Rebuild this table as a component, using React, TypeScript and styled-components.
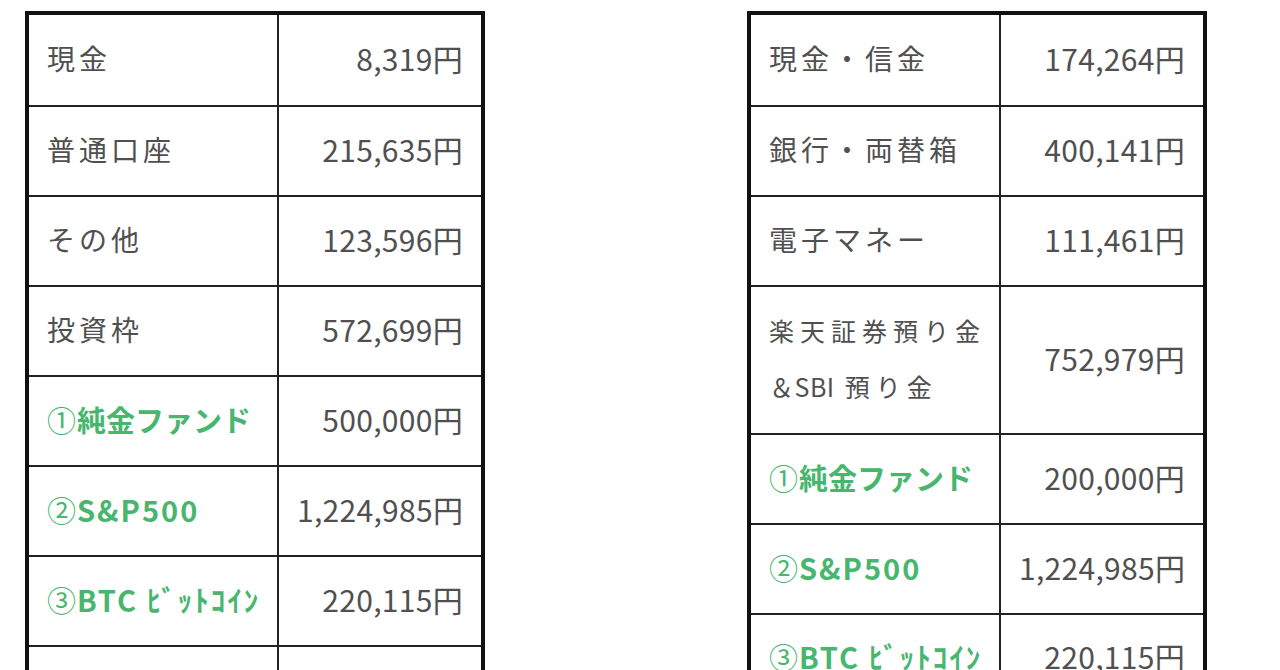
import * as React from "react";
import styled, { createGlobalStyle } from "styled-components";

type Row = {
  label: React.ReactNode;
  amount: string;
  tall?: boolean;
};

const GlobalStyle = createGlobalStyle`
  html, body {
    margin: 0;
    padding: 0;
    background: #fff;
  }
  body {
    font-family: "Noto Sans CJK JP", "Noto Sans", sans-serif;
    overflow: hidden;
  }
`;

const Page = styled.main`
  display: flex;
  align-items: flex-start;
  gap: 262px;
  padding: 11px 0 0 25px;
`;

const Table = styled.table`
  width: 460px;
  border-collapse: collapse;
  border: 4px solid #111;
  table-layout: fixed;
`;

const Tr = styled.tr<{ $tall?: boolean }>`
  height: ${(p) => (p.$tall ? 148 : 90)}px;
  &:first-child {
    height: 93px;
  }
`;

const Cell = styled.td`
  border: 2px solid #222;
  padding: 0 18px 5px;
  color: #505050;
  font-size: 28px;
  vertical-align: middle;
  white-space: nowrap;
`;

const LabelCell = styled(Cell)`
  width: 212px;
  letter-spacing: 4px;
`;

const AmountCell = styled(Cell)`
  text-align: right;
  font-size: 30px;
  letter-spacing: 0.3px;
`;

const SmallLabel = styled.span`
  display: block;
  font-size: 25px;
  line-height: 56px;
  letter-spacing: 6px;
`;

const Latin = styled.span`
  letter-spacing: 0.5px;
  margin-right: 10px;
`;

const GreenLabel = styled.span<{ $spacing: number }>`
  color: #48b66e;
  font-size: 29px;
  font-weight: 700;
  letter-spacing: ${(p) => p.$spacing}px;
`;

const Mark = styled.span`
  font-weight: 400;
  letter-spacing: 0;
  margin-right: 1px;
`;

const Green: React.FC<{ mark: string; spacing?: number; children: React.ReactNode }> = ({
  mark,
  spacing = 0,
  children,
}) => (
  <GreenLabel $spacing={spacing}>
    <Mark>{mark}</Mark>
    {children}
  </GreenLabel>
);

const leftRows: Row[] = [
  { label: "現金", amount: "8,319円" },
  { label: "普通口座", amount: "215,635円" },
  { label: "その他", amount: "123,596円" },
  { label: "投資枠", amount: "572,699円" },
  { label: <Green mark="①">純金ファンド</Green>, amount: "500,000円" },
  { label: <Green mark="②" spacing={2}>S&amp;P500</Green>, amount: "1,224,985円" },
  { label: <Green mark="③" spacing={2}>BTC ﾋﾞｯﾄｺｲﾝ</Green>, amount: "220,115円" },
  { label: "", amount: "" },
];

const rightRows: Row[] = [
  { label: "現金・信金", amount: "174,264円" },
  { label: "銀行・両替箱", amount: "400,141円" },
  { label: "電子マネー", amount: "111,461円" },
  {
    label: (
      <SmallLabel>
        楽天証券預り金
        <br />
        <Latin>＆SBI</Latin>預り金
      </SmallLabel>
    ),
    amount: "752,979円",
    tall: true,
  },
  { label: <Green mark="①">純金ファンド</Green>, amount: "200,000円" },
  { label: <Green mark="②" spacing={2}>S&amp;P500</Green>, amount: "1,224,985円" },
  { label: <Green mark="③" spacing={2}>BTC ﾋﾞｯﾄｺｲﾝ</Green>, amount: "220,115円" },
];

const AssetTable: React.FC<{ rows: Row[] }> = ({ rows }) => (
  <Table>
    <tbody>
      {rows.map((row, i) => (
        <Tr key={i} $tall={row.tall}>
          <LabelCell>{row.label}</LabelCell>
          <AmountCell>{row.amount}</AmountCell>
        </Tr>
      ))}
    </tbody>
  </Table>
);

export default function App() {
  return (
    <>
      <GlobalStyle />
      <Page>
        <AssetTable rows={leftRows} />
        <AssetTable rows={rightRows} />
      </Page>
    </>
  );
}
